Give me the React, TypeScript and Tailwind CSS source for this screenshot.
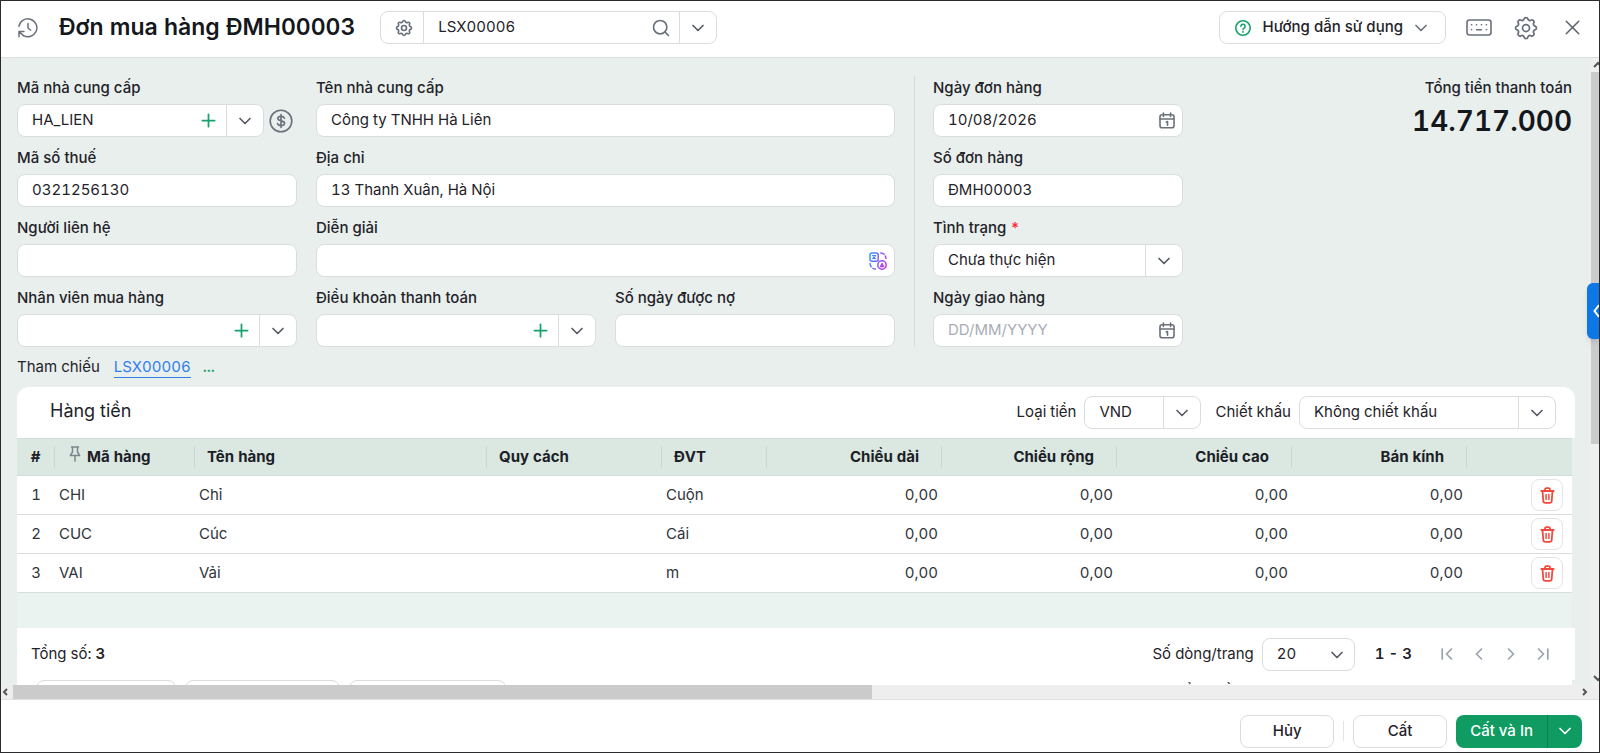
import { useState } from "react"
import type { ReactNode } from "react"
import { ChevronDown, ChevronLeft, ChevronRight, Plus, Search, X } from "lucide-react"
import { TbSettings } from "react-icons/tb"

const rows = [
  { code: "CHI", name: "Chỉ", unit: "Cuộn" },
  { code: "CUC", name: "Cúc", unit: "Cái" },
  { code: "VAI", name: "Vải", unit: "m" },
]

const sizes = ["Chiều dài", "Chiều rộng", "Chiều cao", "Bán kính"]

/* ICONS */

const HistoryIcon = () => (
  <svg width="20" height="20" viewBox="0 0 20 20" fill="none" stroke="#6b717c" strokeWidth="1.5" strokeLinecap="round" strokeLinejoin="round">
    <path d="M1 8.2A9 9 0 1 1 5.4 17.6" />
    <path d="M1 18.8v-5.2h5M1.2 13.8l4.2 3.8" />
    <path d="M10 5.4V10l2.6 2" />
  </svg>
)

const HelpIcon = () => (
  <svg width="16" height="16" viewBox="0 0 16 16" fill="none" stroke="#16a36a" strokeWidth="1.6" strokeLinecap="round">
    <circle cx="8" cy="8" r="7.2" />
    <path d="M5.9 6.3a2.1 2.1 0 1 1 3.2 1.8c-.7.4-1.1.8-1.1 1.5" />
    <path d="M8 11.8v.1" strokeWidth="1.8" />
  </svg>
)

const KeyboardIcon = () => (
  <svg width="26" height="17" viewBox="0 0 26 17" fill="none" stroke="#6b717c" strokeWidth="1.6" strokeLinecap="round">
    <rect x="1" y="1" width="24" height="15" rx="2.5" />
    <path d="M5.5 5.7h.2M10.4 5.7h.2M15.4 5.7h.2M20.3 5.7h.2M5.5 10.8h.2M20.3 10.8h.2M10.6 10.8h4.8" />
  </svg>
)

const CalendarIcon = () => (
  <svg width="16" height="17" viewBox="0 0 16 17" fill="none" stroke="#6b717c" strokeWidth="1.6" strokeLinecap="round" strokeLinejoin="round">
    <rect x="1" y="2.8" width="14" height="13" rx="2" />
    <path d="M1 7h14M4.4 1v3.4M11.6 1v3.4M7.3 10l1.2-.5v3.7" />
  </svg>
)

const MoneyIcon = () => (
  <svg width="24" height="24" viewBox="0 0 24 24" fill="none" stroke="#6b717c" strokeWidth="1.6" strokeLinecap="round">
    <circle cx="12" cy="12" r="10.8" />
    <path d="M15.4 9.2c-.4-1.1-1.6-1.8-3.3-1.8-2 0-3.3.9-3.3 2.2 0 3.3 6.8 1.3 6.8 4.7 0 1.4-1.4 2.3-3.5 2.3-1.8 0-3.2-.8-3.6-2M12 5.6v12.8" />
  </svg>
)

const TranslateIcon = () => (
  <svg width="18" height="18" viewBox="0 0 18 18" fill="none" stroke="url(#translate)" strokeWidth="1.5" strokeLinecap="round" strokeLinejoin="round">
    <defs>
      <linearGradient id="translate" gradientUnits="userSpaceOnUse" x1="0" y1="6" x2="18" y2="12">
        <stop offset="0" stopColor="#2f9bff" />
        <stop offset="0.5" stopColor="#7a5cf8" />
        <stop offset="1" stopColor="#d22bf0" />
      </linearGradient>
    </defs>
    <rect x="1" y="1" width="8.2" height="8.2" rx="2" />
    <path d="M3.5 3.5h3.2M6.5 3.5c-.3 1.6-1.3 2.7-2.9 3.3M4.1 4.9c.6 1 1.4 1.5 2.5 1.9" strokeWidth="1.1" />
    <circle cx="13" cy="13" r="4.2" />
    <path d="M11.4 14.6L13 11.2l1.6 3.4zM12.2 13.7h1.6" strokeWidth="1.1" />
    <path d="M11.8 1c1.3.1 2.3.5 3.2 1.2M16.3 4c.4.7.6 1.5.7 2.4M1 11.5c.1 1.3.5 2.3 1.2 3.2M4 16.3c.7.4 1.5.6 2.4.7" />
  </svg>
)

const PinIcon = () => (
  <svg width="12" height="16" viewBox="0 0 12 16" fill="none" stroke="#7d858c" strokeWidth="1.5" strokeLinecap="round" strokeLinejoin="round">
    <path d="M2.5 1h7M3.5 1v5L1.3 9.6h9.4L8.5 6V1M6 9.6V15" />
  </svg>
)

const TrashIcon = () => (
  <svg width="15" height="17" viewBox="0 0 15 17" fill="none" stroke="#f04a3e" strokeWidth="1.8" strokeLinecap="round" strokeLinejoin="round">
    <path d="M1.3 4h12.4M2.5 4l.8 10a2 2 0 0 0 2 1.9h4.4a2 2 0 0 0 2-1.9l.8-10M5 3.8V2.6A1.5 1.5 0 0 1 6.5 1.1h2A1.5 1.5 0 0 1 10 2.6v1.2" />
    <path d="M6.1 7.4v5M8.9 7.4v5" strokeWidth="1.5" />
  </svg>
)

const PageEnd = ({ flip }: { flip?: boolean }) => (
  <svg width="12" height="12" viewBox="0 0 12 12" fill="none" stroke="currentColor" strokeWidth="1.7" strokeLinecap="round" strokeLinejoin="round" className={flip ? "rotate-180" : ""}>
    <path d="M1.2 1v10M10.5 1L5.5 6l5 5" />
  </svg>
)

/* FORM PARTS */

const box = "flex h-[33px] min-w-0 items-stretch overflow-hidden rounded-lg border border-[#dadde0] bg-white"
const text = "w-full min-w-0 flex-1 bg-transparent px-3.5 outline-none placeholder:text-[#a9adb6]"

type FieldProps = {
  id: string
  label: string
  value?: string
  placeholder?: string
  combo?: boolean
  icon?: ReactNode
  iconLabel?: string
  after?: ReactNode
  className?: string
}

function Field({ id, label, value = "", placeholder, combo, icon, iconLabel, after, className }: FieldProps) {
  return (
    <div className={`min-w-0 ${className ?? ""}`}>
      <label htmlFor={id} className="mb-1 block h-6 font-medium leading-6">
        {label}
      </label>
      <div className="flex items-center gap-[5px]">
        <div className={`${box} flex-1`}>
          <input id={id} defaultValue={value} placeholder={placeholder} className={text} />
          {combo && (
            <>
              <button aria-label={`Thêm ${label}`} className="flex w-[35px] items-center justify-center text-[#16a36a]">
                <Plus size={21} strokeWidth={2} />
              </button>
              <button aria-label={`Chọn ${label}`} className="flex w-[37px] items-center justify-center border-l border-[#dadde0] text-[#555a62]">
                <ChevronDown size={20} />
              </button>
            </>
          )}
          {icon && (
            <button aria-label={iconLabel} className="flex items-center px-[7px]">
              {icon}
            </button>
          )}
        </div>
        {after}
      </div>
    </div>
  )
}

function SelectBox({ id, options, className }: { id: string; options: string[]; className?: string }) {
  return (
    <div className={`${box} relative ${className ?? ""}`}>
      <select id={id} className="w-full appearance-none bg-transparent px-3.5 outline-none">
        {options.map((o) => (
          <option key={o}>{o}</option>
        ))}
      </select>
      <span className="pointer-events-none absolute inset-y-0 right-0 flex w-[37px] items-center justify-center border-l border-[#dadde0] text-[#555a62]">
        <ChevronDown size={20} />
      </span>
    </div>
  )
}

function Header() {
  return (
    <header className="flex h-[57px] shrink-0 items-center border-b border-[#dcdfe1] bg-white pb-[3px] pl-[17px] pr-3.5">
      <button aria-label="Lịch sử">
        <HistoryIcon />
      </button>
      <h1 className="ml-[21px] whitespace-nowrap text-[23px] font-semibold text-[#14171c]">Đơn mua hàng ĐMH00003</h1>

      <div className={`${box} ml-[25px] w-[337px]`}>
        <button aria-label="Tùy chọn tìm kiếm" className="flex w-[43px] items-center justify-center border-r border-[#dadde0] pl-1 text-[#6b717c]">
          <TbSettings size={20} />
        </button>
        <input aria-label="Tìm chứng từ" defaultValue="LSX00006" className={text} />
        <button aria-label="Tìm kiếm" className="px-2 text-[#6b717c]">
          <Search size={20} />
        </button>
        <button aria-label="Mở danh sách" className="flex w-[37px] items-center justify-center border-l border-[#dadde0] text-[#555a62]">
          <ChevronDown size={20} />
        </button>
      </div>

      <button className="ml-auto flex h-[33px] items-center whitespace-nowrap rounded-lg border border-[#dadde0] pl-[15px] pr-3.5 font-medium">
        <HelpIcon />
        <span className="ml-3 mr-2">Hướng dẫn sử dụng</span>
        <ChevronDown size={20} className="text-[#6b717c]" />
      </button>
      <button aria-label="Phím tắt" className="ml-5">
        <KeyboardIcon />
      </button>
      <button aria-label="Thiết lập" className="ml-5 text-[#6b717c]">
        <TbSettings size={28} strokeWidth={1.5} />
      </button>
      <button aria-label="Đóng" className="ml-5 text-[#5f6570]">
        <X size={25} strokeWidth={1.5} />
      </button>
    </header>
  )
}

function OrderForm() {
  return (
    <section className="flex pr-[19px] pt-[18px]">
      <div className="grid flex-[0_1_878px] grid-cols-3 gap-x-[19px] gap-y-[9px]">
        <Field
          id="supplier"
          label="Mã nhà cung cấp"
          value="HA_LIEN"
          combo
          after={
            <button aria-label="Công nợ" className="mr-1">
              <MoneyIcon />
            </button>
          }
        />
        <Field id="supplierName" label="Tên nhà cung cấp" value="Công ty TNHH Hà Liên" className="col-span-2" />
        <Field id="tax" label="Mã số thuế" value="0321256130" />
        <Field id="address" label="Địa chỉ" value="13 Thanh Xuân, Hà Nội" className="col-span-2" />
        <Field id="contact" label="Người liên hệ" />
        <Field id="note" label="Diễn giải" icon={<TranslateIcon />} iconLabel="Dịch" className="col-span-2" />
        <Field id="buyer" label="Nhân viên mua hàng" combo />
        <Field id="terms" label="Điều khoản thanh toán" combo />
        <Field id="debtDays" label="Số ngày được nợ" />
      </div>

      <div className="ml-[19px] mr-[18px] border-l border-[#d6dbda]" />

      <div className="grid flex-[0_1_250px] gap-y-[9px]">
        <Field id="orderDate" label="Ngày đơn hàng" value="10/08/2026" icon={<CalendarIcon />} iconLabel="Chọn ngày đơn hàng" />
        <Field id="orderNo" label="Số đơn hàng" value="ĐMH00003" />
        <div>
          <label htmlFor="status" className="mb-1 block h-6 font-medium leading-6">
            Tình trạng <span className="text-red-500">*</span>
          </label>
          <SelectBox id="status" options={["Chưa thực hiện", "Đang thực hiện", "Hoàn thành"]} />
        </div>
        <Field id="delivery" label="Ngày giao hàng" placeholder="DD/MM/YYYY" icon={<CalendarIcon />} iconLabel="Chọn ngày giao hàng" />
      </div>

      <div className="ml-auto text-right">
        <div className="h-6 whitespace-nowrap font-medium leading-6">Tổng tiền thanh toán</div>
        <div className="text-[28px] font-semibold leading-[42px] text-[#14171c]">14.717.000</div>
      </div>
    </section>
  )
}

function ItemTable() {
  const [items, setItems] = useState(rows)
  const head = "border-y border-[#d3dcd8] p-0 py-[7px]"
  const cell = "h-[39px] truncate border-b border-[#dadde0] px-1 py-0"
  const split = "h-[22px] border-r border-[#cbd5d1] leading-[22px]"

  return (
    <table className="w-full table-fixed border-separate border-spacing-0">
      <colgroup>
        <col className="w-[38px]" />
        <col className="w-[140px]" />
        <col className="w-[292px]" />
        <col className="w-[175px]" />
        <col className="w-[105px]" />
        <col className="w-[175px]" />
        <col className="w-[175px]" />
        <col className="w-[175px]" />
        <col className="w-[175px]" />
        <col />
      </colgroup>
      <thead>
        <tr className="bg-[#dae8e1] text-left font-semibold text-[#1c2026]">
          <th className={head}><span className={`${split} block text-center`}>#</span></th>
          <th className={head}>
            <span className={`${split} flex gap-1.5 pl-3.5`}>
              <PinIcon />
              Mã hàng
            </span>
          </th>
          <th className={head}><span className={`${split} block pl-3`}>Tên hàng</span></th>
          <th className={head}><span className={`${split} block pl-3`}>Quy cách</span></th>
          <th className={head}><span className={`${split} block pl-3`}>ĐVT</span></th>
          {sizes.map((s) => (
            <th key={s} className={head}><span className={`${split} block pr-[22px] text-right`}>{s}</span></th>
          ))}
          <th className={head} aria-label="Xóa" />
        </tr>
      </thead>
      <tbody className="text-[#30343b]">
        {items.map((item, i) => (
          <tr key={item.code} className="bg-white">
            <td className={`${cell} text-center`}>{i + 1}</td>
            <td className={cell}>{item.code}</td>
            <td className={cell}>{item.name}</td>
            <td className={cell} />
            <td className={cell}>{item.unit}</td>
            {sizes.map((s) => (
              <td key={s} className={`${cell} text-right`}>0,00</td>
            ))}
            <td className={cell}>
              <button
                aria-label={`Xóa ${item.name}`}
                onClick={() => setItems(items.filter((r) => r !== item))}
                className="ml-auto mr-[5px] flex size-8 items-center justify-center rounded-lg border border-[#e2e4e6]"
              >
                <TrashIcon />
              </button>
            </td>
          </tr>
        ))}
      </tbody>
    </table>
  )
}

function ItemPanel() {
  const action = "h-8 rounded-lg border border-[#dadde0]"

  return (
    <section className="mr-4 mt-2">
      <div className="flex h-[51px] items-center rounded-t-xl bg-white pl-[33px] pr-[19px]">
        <h2 className="pb-1 text-lg">Hàng tiền</h2>
        <label htmlFor="currency" className="ml-auto mr-2">Loại tiền</label>
        <SelectBox id="currency" options={["VND", "USD"]} className="w-[117px]" />
        <label htmlFor="discount" className="ml-3.5 mr-2">Chiết khấu</label>
        <SelectBox id="discount" options={["Không chiết khấu", "Theo mặt hàng"]} className="w-[257px]" />
      </div>

      <div className="mr-[3px] bg-[#eaf3f0] pb-[35px]">
        <ItemTable />
      </div>

      <div className="flex h-[52px] items-center bg-white pl-3.5 pr-[22px]">
        <span>
          Tổng số: <b className="font-semibold">3</b>
        </span>
        <label htmlFor="pageSize" className="ml-auto mr-2">Số dòng/trang</label>
        <div className="relative w-[93px]">
          <select id="pageSize" className="block h-[33px] w-full appearance-none rounded-lg border border-[#dadde0] px-3.5 outline-none">
            <option>20</option>
            <option>50</option>
          </select>
          <ChevronDown size={20} className="pointer-events-none absolute right-2 top-[7px] text-[#555a62]" />
        </div>
        <span className="ml-5 font-semibold">1 - 3</span>
        <div className="ml-[25px] flex items-center gap-3 text-[#9aa1af]">
          <button aria-label="Trang đầu" className="flex w-5 justify-center"><PageEnd /></button>
          <button aria-label="Trang trước" className="flex w-5 justify-center"><ChevronLeft size={20} /></button>
          <button aria-label="Trang sau" className="flex w-5 justify-center"><ChevronRight size={20} /></button>
          <button aria-label="Trang cuối" className="flex w-5 justify-center"><PageEnd flip /></button>
        </div>
      </div>

      <div className="mr-[3px] flex gap-[9px] bg-white pl-[19px]">
        <button aria-label="Thêm dòng" className={`${action} w-[140px]`} />
        <button aria-label="Thêm ghi chú" className={`${action} w-[155px]`} />
        <button aria-label="Xóa hết dòng" className={`${action} w-[157px]`} />
        <span className="ml-auto mr-[292px] leading-6">Tổng tiền hàng</span>
      </div>
    </section>
  )
}

function Footer() {
  const btn = "h-[33px] w-[94px] rounded-lg border border-[#dadde0] font-medium"

  return (
    <footer className="flex h-[52px] shrink-0 items-center justify-end bg-white pr-[17px] pt-2.5">
      <button className={btn}>Hủy</button>
      <div className="mx-[9px] h-5 border-l border-[#e2e4e6]" />
      <button className={btn}>Cất</button>
      <div className="ml-[9px] flex h-[33px] overflow-hidden rounded-lg bg-[#109b63] font-medium text-white">
        <button className="px-3.5">Cất và In</button>
        <button aria-label="Lựa chọn khác" className="flex w-[35px] items-center justify-center border-l border-[#0b7f50]">
          <ChevronDown size={20} />
        </button>
      </div>
    </footer>
  )
}

export default function App() {
  return (
    <div className="relative flex h-screen flex-col overflow-hidden border border-[#2b2b2d] bg-white font-['Inter',sans-serif] text-[15px] tabular-nums text-[#1f2329]">
      <Header />

      <div className="flex min-h-0 flex-1 bg-[#e9efed]">
        <main className="min-w-0 flex-1 overflow-hidden pl-4">
          <OrderForm />
          <div className="mt-2 flex h-6 items-center">
            <span>Tham chiếu</span>
            <a href="#ref" className="ml-3.5 border-b border-[#2f80ed] leading-5 text-[#2f80ed]">LSX00006</a>
            <button aria-label="Chọn chứng từ tham chiếu" className="ml-3 font-semibold leading-6 text-[#16a36a]">...</button>
          </div>
          <ItemPanel />
        </main>

        {/* Vertical scrollbar */}
        <div className="flex w-2 flex-col overflow-hidden bg-[#efefef]">
          <svg width="14" height="14" viewBox="0 0 14 14" fill="none" stroke="#555" strokeWidth="2" className="shrink-0">
            <path d="M3 9l4-4 4 4" />
          </svg>
          <div className="h-[372px] bg-[#cbcbcb]" />
          <svg width="14" height="14" viewBox="0 0 14 14" fill="none" stroke="#555" strokeWidth="2" className="mt-auto shrink-0">
            <path d="M3 5l4 4 4-4" />
          </svg>
        </div>
      </div>

      {/* Horizontal scrollbar */}
      <div className="flex h-[15px] shrink-0 items-center border-b border-[#e0e0e0] bg-[#eeeeee] pr-2">
        <svg width="12" height="14" viewBox="0 0 12 14" fill="none" stroke="#555" strokeWidth="2">
          <path d="M6 4L3 7l3 3" />
        </svg>
        <div className="h-full w-[54%] bg-[#cbcbcb]" />
        <svg width="12" height="14" viewBox="0 0 12 14" fill="none" stroke="#555" strokeWidth="2" className="ml-auto">
          <path d="M4 4l3 3-3 3" />
        </svg>
      </div>

      <Footer />

      {/* Side panel handle */}
      <button aria-label="Mở bảng bên" className="absolute right-0 top-[282px] flex h-14 w-3 items-center justify-end overflow-hidden rounded-l-md bg-[#0b78e6] text-white shadow-md">
        <svg width="6" height="14" viewBox="0 0 6 14" fill="none" stroke="currentColor" strokeWidth="2">
          <path d="M6 1L1.5 7 6 13" />
        </svg>
      </button>
    </div>
  )
}
